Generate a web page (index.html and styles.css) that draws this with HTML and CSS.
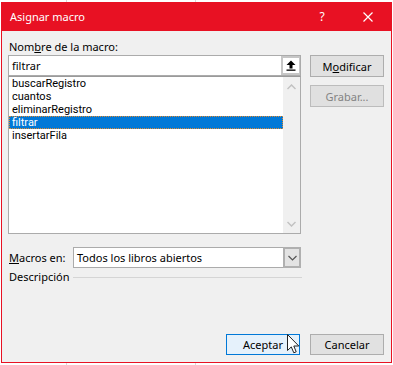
FILE: index.html
```html
<!DOCTYPE html>
<html lang="es">
<head>
<meta charset="utf-8">
<title>Asignar macro</title>
<link rel="stylesheet" href="styles.css">
</head>
<body>
<div class="dialog">
  <div class="titlebar">
    <span class="title">Asignar macro</span>
    <span class="tbtn help">?</span>
    <span class="tbtn close">
      <svg width="10" height="10" viewBox="0 0 10 10"><path d="M0.5 0.5L9.5 9.5M9.5 0.5L0.5 9.5" stroke="#fff" stroke-width="1.2" fill="none"/></svg>
    </span>
  </div>
  <div class="body">
    <div class="main">
      <div class="left">
        <div class="label">Nom<u>b</u>re de la macro:</div>
        <div class="namebox">
          <span class="nametext">filtrar</span>
          <span class="upbtn">
            <svg width="10" height="11" viewBox="0 0 10 11"><path d="M5 0.5L9.5 5H6.5V8.5H3.5V5H0.5Z" fill="#000"/><rect x="0.5" y="9.5" width="9" height="1.3" fill="#000"/></svg>
          </span>
        </div>
        <div class="list">
          <div class="items">
            <div class="item">buscarRegistro</div>
            <div class="item">cuantos</div>
            <div class="item">eliminarRegistro</div>
            <div class="item selected">filtrar</div>
            <div class="item">insertarFila</div>
          </div>
          <div class="scroll">
            <svg width="9" height="6" viewBox="0 0 9 6"><path d="M0.5 5L4.5 1L8.5 5" stroke="#c2c2c2" stroke-width="1.5" fill="none"/></svg>
            <svg width="9" height="6" viewBox="0 0 9 6"><path d="M0.5 1L4.5 5L8.5 1" stroke="#c2c2c2" stroke-width="1.5" fill="none"/></svg>
          </div>
        </div>
        <div class="macrosrow">
          <span class="mlabel"><u>M</u>acros en:</span>
          <div class="select">
            <span class="seltext">Todos los libros abiertos</span>
            <span class="dropbtn">
              <svg width="9" height="6" viewBox="0 0 9 6"><path d="M0.5 1L4.5 5L8.5 1" stroke="#555" stroke-width="1.2" fill="none"/></svg>
            </span>
          </div>
        </div>
        <div class="descrow">
          <span class="dlabel">Descripción</span>
          <span class="dline"></span>
        </div>
      </div>
      <div class="right">
        <div class="btn">M<u>o</u>dificar</div>
        <div class="btn disabled">Grabar...</div>
      </div>
    </div>
    <div class="footer">
      <div class="btn fbtn default">Aceptar</div>
      <div class="btn fbtn">Cancelar</div>
    </div>
  </div>
</div>
<svg class="cursor" width="13" height="20" viewBox="0 0 13 20"><path d="M0.5 0.5V16.5L4.3 12.9L6.8 18.8L9.2 17.8L6.8 12H11.8Z" fill="#fff" stroke="#222" stroke-width="1" stroke-linejoin="round"/></svg>
</body>
</html>
```
FILE: styles.css
```css
* { box-sizing: border-box; }
html, body { margin: 0; padding: 0; }
body {
  width: 393px;
  height: 365px;
  overflow: hidden;
  position: relative;
  background: #ffffff linear-gradient(to right, transparent 66px, #d9d9d9 66px, #d9d9d9 67px, transparent 67px, transparent 195px, #d9d9d9 195px, #d9d9d9 196px, transparent 196px);
  font-family: "Noto Sans", sans-serif;
  font-size: 11px;
  color: #000;
}
u { text-decoration: underline; text-underline-offset: 1px; }
.dialog {
  margin: 2px 0 0 1px;
  width: 391px;
  height: 361px;
  border: 1px solid #e81123;
  border-top: 0;
  background: #f0f0f0;
  display: flex;
  flex-direction: column;
}
.titlebar {
  height: 29px;
  flex: none;
  background: #e81123;
  color: #fff;
  display: flex;
  align-items: center;
  padding-left: 8px;
}
.title { flex: 1; font-size: 11px; line-height: 15px; }
.tbtn {
  width: 46px;
  height: 29px;
  display: flex;
  align-items: center;
  justify-content: center;
}
.help { font-size: 12px; }
.body {
  flex: 1;
  display: flex;
  flex-direction: column;
  padding: 7px 7px 7px 6px;
}
.main { display: flex; gap: 9px; }
.left { width: 293px; display: flex; flex-direction: column; }
.right { width: 74px; display: flex; flex-direction: column; gap: 8px; padding-top: 17px; }
.label { height: 17px; line-height: 17px; padding-left: 1px; }
.namebox {
  height: 21px;
  border: 1px solid #ababab;
  background: #fff;
  display: flex;
  align-items: stretch;
}
.nametext { flex: 1; line-height: 19px; padding-left: 3px; }
.upbtn {
  width: 19px;
  border: 2px solid #c6c6c6;
  border-right-width: 1px;
  background: #fff;
  display: flex;
  align-items: center;
  justify-content: center;
}
.list {
  height: 158px;
  border: 1px solid #ababab;
  border-top-color: #9a9a9a;
  background: #fff;
  display: flex;
}
.items { flex: 1; display: flex; flex-direction: column; }
.item {
  height: 13px;
  line-height: 10px;
  padding-top: 1px;
  font-family: Roboto, "Noto Sans", sans-serif;
  font-size: 11px;
  padding-left: 2px;
  border: 1px solid transparent;
  white-space: nowrap;
}
.item.selected {
  background: #0078d7;
  color: #fff;
  border: 1px dotted #e08a30;
}
.scroll {
  width: 17px;
  background: #f0f0f0;
  display: flex;
  flex-direction: column;
  justify-content: space-between;
  align-items: center;
  padding: 7px 0 6px;
}
.macrosrow {
  margin-top: 13px;
  height: 21px;
  display: flex;
  align-items: center;
}
.mlabel { width: 65px; padding-left: 1px; }
.select {
  flex: 1;
  height: 21px;
  border: 1px solid #ababab;
  background: #fff;
  display: flex;
}
.seltext { flex: 1; line-height: 19px; padding-left: 3px; }
.dropbtn {
  width: 18px;
  margin: -1px -1px -1px 0;
  border: 2px solid #b0b0b0;
  background: #e3e3e3;
  display: flex;
  align-items: center;
  justify-content: center;
}
.descrow {
  margin-top: 2px;
  height: 14px;
  display: flex;
  align-items: center;
}
.dlabel { width: 65px; padding-left: 1px; line-height: 14px; }
.dline { flex: 1; height: 1px; background: #d5d5d5; margin-right: -1px; }
.btn {
  height: 22px;
  border: 1px solid #adadad;
  background: #e1e1e1;
  display: flex;
  align-items: center;
  justify-content: center;
  line-height: 15px;
}
.btn.disabled { color: #838383; background: #e0e0e0; border-color: #bcbcbc; }
.footer {
  margin-top: auto;
  display: flex;
  justify-content: flex-end;
  gap: 10px;
}
.fbtn { width: 74px; height: 21px; }
.btn.default { background: #e5f1fb; border-color: #0078d7; }
.cursor { position: absolute; left: 287px; top: 334px; }
```
